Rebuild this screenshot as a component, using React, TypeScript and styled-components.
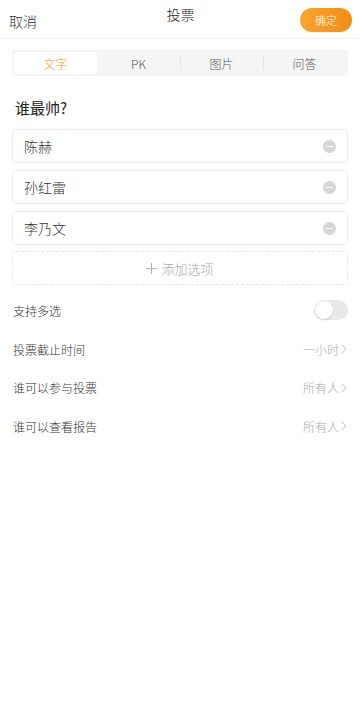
import React, { useState } from "react";
import styled, { createGlobalStyle } from "styled-components";

const GlobalStyle = createGlobalStyle`
  html, body {
    margin: 0;
    padding: 0;
    background: #ffffff;
  }
  body {
    font-family: "Noto Sans CJK SC", "Noto Sans", sans-serif;
    font-weight: 300;
    color: #333333;
  }
  * {
    box-sizing: border-box;
  }
`;

const Page = styled.div`
  width: 360px;
  min-height: 721px;
  background: #ffffff;
`;

const Header = styled.div`
  height: 39px;
  display: grid;
  grid-template-columns: 1fr auto 1fr;
  align-items: center;
  padding: 0 8px 0 9px;
  border-bottom: 1px solid #f3f3f3;
`;

const Cancel = styled.span`
  font-size: 14px;
  color: #333;
  padding-top: 3px;
`;

const Title = styled.span`
  font-size: 14px;
  color: #222;
  margin-top: -10px;
`;

const Confirm = styled.button`
  justify-self: end;
  width: 52px;
  height: 24px;
  border: none;
  border-radius: 12px;
  background: linear-gradient(90deg, #f9a431, #f48d12);
  color: #fff;
  font-size: 11px;
  font-family: inherit;
  font-weight: 300;
  padding: 0;
  margin-top: 1px;
`;

const Body = styled.div`
  padding: 11px 12px 0 12px;
`;

const Tabs = styled.div`
  display: grid;
  grid-template-columns: repeat(4, 1fr);
  height: 26px;
  background: #f5f5f5;
  border-radius: 3px;
  padding: 2px;
`;

const Tab = styled.div<{ $active?: boolean; $divider?: boolean }>`
  display: flex;
  align-items: center;
  justify-content: center;
  font-size: 12px;
  color: ${(p) => (p.$active ? "#f59b22" : "#555")};
  background: ${(p) => (p.$active ? "#ffffff" : "transparent")};
  border-radius: 3px;
  position: relative;
  &::before {
    content: "";
    display: ${(p) => (p.$divider ? "block" : "none")};
    position: absolute;
    left: 0;
    top: 4px;
    bottom: 4px;
    width: 1px;
    background: #e4e4e4;
  }
`;

const Question = styled.div`
  font-size: 15px;
  font-weight: 400;
  color: #222;
  margin: 22px 0 0 3px;
  height: 20px;
  line-height: 20px;
`;

const Options = styled.div`
  display: flex;
  flex-direction: column;
  gap: 7px;
  margin-top: 11px;
`;

const OptionBox = styled.div`
  height: 34px;
  border: 1px solid #ececec;
  border-radius: 4px;
  display: flex;
  align-items: center;
  justify-content: space-between;
  padding: 0 11px 0 11px;
  font-size: 14px;
  color: #333;
`;

const Minus = styled.span`
  width: 13px;
  height: 13px;
  border-radius: 50%;
  background: #d6d6d6;
  position: relative;
  &::after {
    content: "";
    position: absolute;
    left: 3px;
    right: 3px;
    top: 6px;
    height: 1px;
    background: #ffffff;
  }
`;

const AddBox = styled.div`
  height: 34px;
  border: 1px dashed #e6e6e6;
  border-radius: 4px;
  display: flex;
  align-items: center;
  justify-content: center;
  gap: 4px;
  font-size: 13px;
  color: #aaa;
  margin-top: -1px;
`;

const Settings = styled.div`
  margin-top: 6px;
  display: flex;
  flex-direction: column;
`;

const Row = styled.div`
  height: 38.7px;
  display: flex;
  align-items: center;
  justify-content: space-between;
  padding-left: 1px;
  font-size: 12px;
  color: #333;
`;

const Value = styled.span`
  display: flex;
  align-items: center;
  gap: 2px;
  color: #aaa;
  font-size: 12px;
  padding-right: 1px;
`;

const Toggle = styled.div<{ $on: boolean }>`
  width: 34px;
  height: 20px;
  border-radius: 10px;
  background: ${(p) => (p.$on ? "#f59b22" : "#e9e9e9")};
  position: relative;
  &::after {
    content: "";
    position: absolute;
    top: 1px;
    left: ${(p) => (p.$on ? "15px" : "1px")};
    width: 18px;
    height: 18px;
    border-radius: 50%;
    background: #fff;
    box-shadow: 0 1px 2px rgba(0, 0, 0, 0.15);
  }
`;

const Chevron = () => (
  <svg width="6" height="10" viewBox="0 0 6 10">
    <path d="M1 1l4 4-4 4" fill="none" stroke="#c4c4c4" strokeWidth="1" />
  </svg>
);

const Plus = () => (
  <svg width="11" height="11" viewBox="0 0 11 11">
    <path d="M5.5 0v11M0 5.5h11" stroke="#b0b0b0" strokeWidth="1" />
  </svg>
);

const tabs = ["文字", "PK", "图片", "问答"];
const options = ["陈赫", "孙红雷", "李乃文"];
const rows = [
  { label: "投票截止时间", value: "一小时" },
  { label: "谁可以参与投票", value: "所有人" },
  { label: "谁可以查看报告", value: "所有人" },
];

export default function App() {
  const [multi, setMulti] = useState(false);
  return (
    <Page>
      <GlobalStyle />
      <Header>
        <Cancel>取消</Cancel>
        <Title>投票</Title>
        <Confirm>确定</Confirm>
      </Header>
      <Body>
        <Tabs>
          {tabs.map((t, i) => (
            <Tab key={t} $active={i === 0} $divider={i > 1}>
              {t}
            </Tab>
          ))}
        </Tabs>
        <Question>谁最帅?</Question>
        <Options>
          {options.map((o) => (
            <OptionBox key={o}>
              {o}
              <Minus />
            </OptionBox>
          ))}
          <AddBox>
            <Plus />
            添加选项
          </AddBox>
        </Options>
        <Settings>
          <Row>
            支持多选
            <Toggle $on={multi} onClick={() => setMulti(!multi)} />
          </Row>
          {rows.map((r) => (
            <Row key={r.label}>
              {r.label}
              <Value>
                {r.value}
                <Chevron />
              </Value>
            </Row>
          ))}
        </Settings>
      </Body>
    </Page>
  );
}
